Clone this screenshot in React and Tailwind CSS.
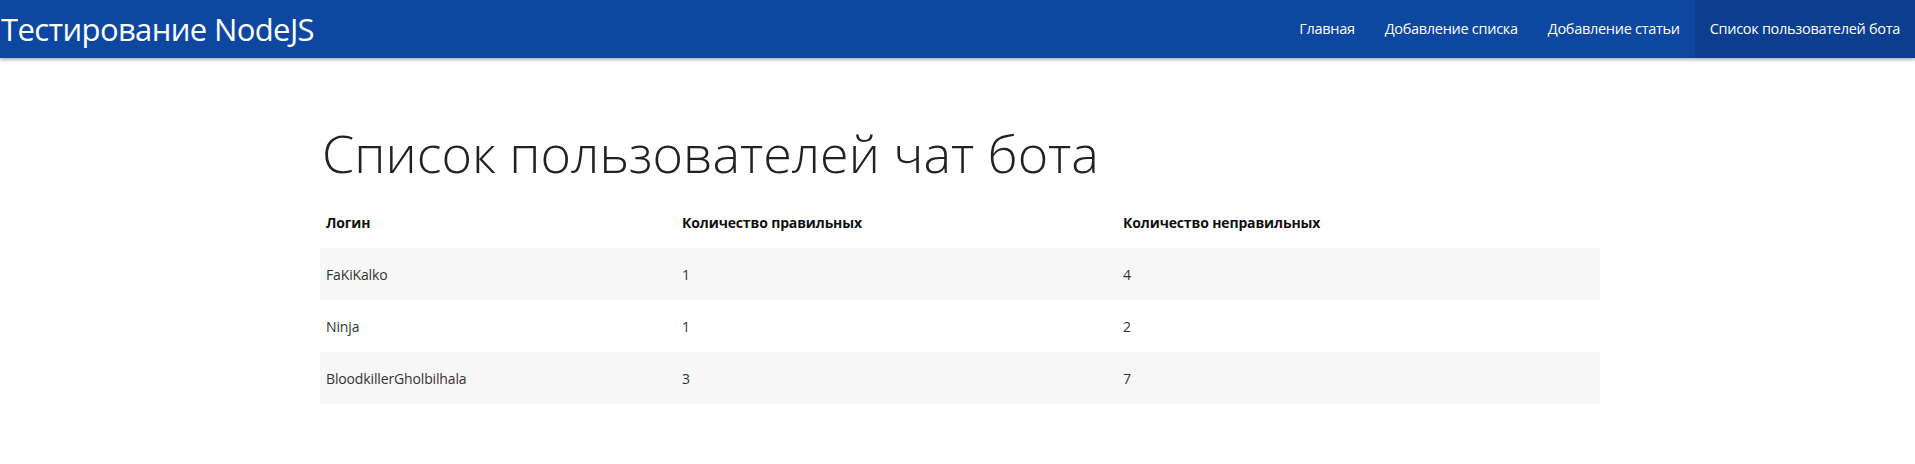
export default function App() {
  const rows = [
    ["FaKiKalko", "1", "4"],
    ["Ninja", "1", "2"],
    ["BloodkillerGholbilhala", "3", "7"],
  ];
  const font = { fontFamily: '"Open Sans", "Noto Sans", sans-serif' };
  return (
    <div className="min-h-[464px] bg-white" style={font}>
      <nav className="relative z-10 flex h-[58px] items-stretch justify-between bg-[#0d47a1] shadow-[0_2px_3px_rgba(0,0,0,0.3)]">
        <a className="flex items-center pl-[1px] text-[31px] leading-none text-white tracking-[-0.02em]">Тестирование NodeJS</a>
        <ul className="flex items-stretch text-[14.5px] text-white tracking-[-0.02em]">
          <li className="flex items-center px-[15px]">Главная</li>
          <li className="flex items-center px-[15px]">Добавление списка</li>
          <li className="flex items-center px-[15px]">Добавление статьи</li>
          <li className="flex items-center bg-[#0b3e8f] px-[15px]">Список пользователей бота</li>
        </ul>
      </nav>
      <main className="mx-auto w-[1285px]">
        <div className="ml-[5px] w-[1280px]">
          <h1 className="pt-[64px] pb-[12px] pl-[2px] text-[52px] font-light leading-[62px] text-[#222]">
            Список пользователей чат бота
          </h1>
          <table className="w-full border-collapse text-[14px] text-[#333] tracking-[-0.01em]">
            <thead>
              <tr className="h-[52px]">
                <th className="w-[356px] pl-[6px] text-left font-bold text-[#111]">Логин</th>
                <th className="w-[441px] pl-[6px] text-left font-bold text-[#111]">Количество правильных</th>
                <th className="pl-[6px] text-left font-bold text-[#111]">Количество неправильных</th>
              </tr>
            </thead>
            <tbody>
              {rows.map((r, i) => (
                <tr key={i} className={i % 2 === 0 ? "h-[52px] bg-[#f7f7f7]" : "h-[52px]"}>
                  <td className="pl-[6px]">{r[0]}</td>
                  <td className="pl-[6px]">{r[1]}</td>
                  <td className="pl-[6px]">{r[2]}</td>
                </tr>
              ))}
            </tbody>
          </table>
        </div>
      </main>
    </div>
  );
}
